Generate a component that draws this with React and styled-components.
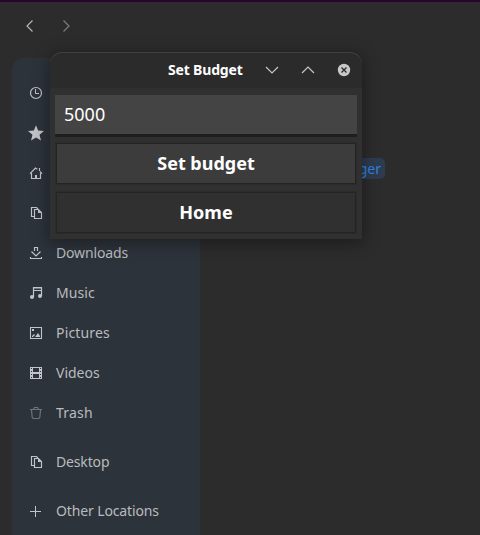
import React from "react";
import styled, { createGlobalStyle } from "styled-components";

const Global = createGlobalStyle`
  * { box-sizing: border-box; }
  body { margin: 0; background: #2c2c2c; overflow: hidden; font-family: "Noto Sans", sans-serif; }
`;
const Screen = styled.div`
  position: relative; width: 480px; height: 535px; overflow: hidden;
  background: #2c2c2c; border-top: 2px solid #2c0432;
`;
const Nav = styled.nav`
  height: 56px; padding: 16px 0 0 22px; display: flex; gap: 19px; color: #b4b4b4;
`;
const Glyph = styled.svg`
  display: block; width: 16px; height: 16px; flex: none; overflow: visible;
  fill: none; stroke: currentColor; stroke-width: 1; opacity: ${(p) => p.$o || 1};
`;
const Sidebar = styled.aside`
  width: 188px; height: 490px; margin-left: 12px; padding-top: 15px;
  border-radius: 12px 0 0 0; background: #2d333b;
`;
const Place = styled.div`
  height: 40px; margin-top: ${(p) => p.$gap || 0}px; padding-left: 16px;
  display: flex; align-items: center; gap: 12px; color: #c2c4c7;
`;
const Label = styled.span`
  font-size: 14px; line-height: 20px; letter-spacing: ${(p) => p.$ls || 0}px; color: #b9bbbe; white-space: nowrap;
`;
const FileName = styled.div`
  position: absolute; right: 95px; top: 156px; height: 21px; padding: 0 4px; border-radius: 5px;
  background: #2e3c4f; color: #3581e0; font-size: 14px; line-height: 21px;
`;
const Dialog = styled.section`
  position: absolute; left: 50px; top: 50px; width: 312px; height: 187px; background: #303030;
  border-radius: 12px 12px 0 0; box-shadow: 0 3px 16px 2px rgba(0,0,0,.34);
`;
const TitleBar = styled.header`
  height: 36px; display: flex; align-items: center; padding: 0 10px 0 118px; background: #2b2b2b;
  border-radius: 12px 12px 0 0; box-shadow: inset 0 1px #414141; color: #c8c8c8;
`;
const Title = styled.h1`
  margin: 0; width: 96px; font-size: 14px; line-height: 20px; font-weight: 700; color: #fff;
  letter-spacing: -0.17px; white-space: nowrap;
`;
const Controls = styled.div`display: flex; gap: 20px;`;
const Form = styled.div`padding: 7px 5px 0; display: flex; flex-direction: column;`;
const Entry = styled.div`
  height: 42px; padding-left: 9px; background: #444; border-bottom: 3px solid #1e1e1e;
  color: #fff; font-size: 18px; line-height: 39px;
`;
const Button = styled.button`
  height: 43px; margin: ${(p) => p.$top}px 0 0; padding: 0 0 2px; border: 1px solid #2b2b2b; font-family: inherit;
  background: ${(p) => p.$bg}; box-shadow: inset 0 0 0 1px #242424;
  color: #fff; font-size: 18px; font-weight: 700; line-height: 24px;
`;

const icons = {
  recent: <><circle cx="8" cy="8" r="5.5" strokeWidth="1.2" /><path d="M7.5 4v4.5H11" /></>,
  star: <path fill="currentColor" stroke="none" d="M8 .3l2.1 5.3 5.9.4-4.5 3.7 1.5 5.8L8 12.4l-5 3.1 1.5-5.8L0 6l5.9-.4z" />,
  home: <><path d="M2 8.7L7.5 3l1.8 1.3M11.5 3v3M12 6.5l2 2.2M3.5 8v5.5h9V8" strokeWidth="1.15" /><path d="M7 10h2v3H7z" fill="currentColor" stroke="none" /></>,
  files: <><path d="M6 11.5H3.5v-9h5L10 4M6.5 4.5h4l3 3v6h-7z" strokeWidth="1.15" /><path d="M10 4v4h4z" fill="currentColor" stroke="none" /></>,
  download: <><path d="M2.5 12v1.5h11V12M6.5 6V2.5h3V6M3.5 6.5L8 11l4.5-4.5" strokeWidth="1.15" /></>,
  music: <><path d="M5.5 12V2.5h8V11M5.5 5.5h8" strokeWidth="1.2" /><path d="M5.5 3h8v1h-8z" fill="currentColor" stroke="none" opacity=".5" /><circle cx="4" cy="12" r="2" fill="currentColor" stroke="none" /><circle cx="12" cy="11" r="2" fill="currentColor" stroke="none" /></>,
  picture: <><path d="M2.5 2.5h11v11h-11z" strokeWidth="1.1" /><path d="M4 12v-1l2-2 1 1-2 2zM7 12l3-4 2 3v1zM4 4h2v2H4z" fill="currentColor" stroke="none" /></>,
  video: <path d="M2 2h12v12H2zM3 3v1h1V3zm0 3v1h1V6zm0 3v1h1V9zm0 3v1h1v-1zM12 3v1h1V3zm0 3v1h1V6zm0 3v1h1V9zm0 3v1h1v-1zM5 3v4h6V3zm0 6v4h6V9z" fillRule="evenodd" fill="currentColor" stroke="none" />,
  trash: <path d="M2 4.5h12M5.5 4l1-1.5h3l1 1.5M3.5 5l.7 7.5 1 1h5.6l1-1 .7-7.5" strokeWidth="1.15" />,
  plus: <path d="M2 8.5h11M7.5 3v11" />,
  back: <path d="M10.5 2.5L5 8l5.5 5.5" strokeWidth="1.2" />,
  forward: <path d="M6.5 2.5L12 8l-5.5 5.5" strokeWidth="1.2" />,
  down: <path d="M2 5l6 6 6-6" strokeWidth="1.15" />,
  up: <path d="M2 11l6-6 6 6" strokeWidth="1.15" />,
  close: <><circle cx="8" cy="8" r="6.2" fill="currentColor" stroke="none" /><path d="M5.5 5.5l5 5m0-5l-5 5" stroke="#2b2b2b" strokeWidth="1.3" /></>,
};
const Icon = ({ name, o }) => <Glyph viewBox="0 0 16 16" $o={o}>{icons[name]}</Glyph>;

const places = [
  { icon: "recent" },
  { icon: "star" },
  { icon: "home" },
  { icon: "files" },
  { icon: "download", text: "Downloads", ls: -0.15 },
  { icon: "music", text: "Music", ls: 0.1 },
  { icon: "picture", text: "Pictures", ls: 0.17 },
  { icon: "video", text: "Videos" },
  { icon: "trash", text: "Trash", o: 0.45, ls: 0.22 },
  { icon: "files", text: "Desktop", gap: 9, ls: -0.15 },
  { icon: "plus", text: "Other Locations", gap: 9, ls: -0.13 },
];

export default function App() {
  return (
    <Screen>
      <Global />
      <Nav><Icon name="back" /><Icon name="forward" o={0.6} /></Nav>
      <Sidebar>
        {places.map((p, i) => (
          <Place key={i} $gap={p.gap}>
            <Icon name={p.icon} o={p.o} />
            {p.text && <Label $ls={p.ls}>{p.text}</Label>}
          </Place>
        ))}
      </Sidebar>
      <FileName>ger</FileName>
      <Dialog>
        <TitleBar>
          <Title>Set Budget</Title>
          <Controls><Icon name="down" /><Icon name="up" /><Icon name="close" /></Controls>
        </TitleBar>
        <Form>
          <Entry>5000</Entry>
          <Button $top={5} $bg="#3c3c3c">Set budget</Button>
          <Button $top={6} $bg="#303030">Home</Button>
        </Form>
      </Dialog>
    </Screen>
  );
}
